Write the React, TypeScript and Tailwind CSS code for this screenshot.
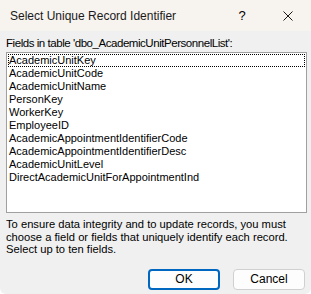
const fields = [
  "AcademicUnitKey",
  "AcademicUnitCode",
  "AcademicUnitName",
  "PersonKey",
  "WorkerKey",
  "EmployeeID",
  "AcademicAppointmentIdentifierCode",
  "AcademicAppointmentIdentifierDesc",
  "AcademicUnitLevel",
  "DirectAcademicUnitForAppointmentInd",
];

export default function App() {
  return (
    <div
      className="w-[311px] h-[294px] bg-[#f0f0f0] flex flex-col overflow-hidden rounded-b-[6px] text-[#000]"
      style={{ fontFamily: "'Liberation Sans', Arial, sans-serif" }}
    >
      {/* Title bar */}
      <div className="h-[31px] bg-[#f7f3ef] flex items-center shrink-0">
        <span className="pl-[10px] text-[12px] flex-1 text-[#1a1a1a]">Select Unique Record Identifier</span>
        <span className="w-[46px] text-center text-[13px]">?</span>
        <span className="w-[46px] flex justify-center">
          <svg width="10" height="10" viewBox="0 0 10 10" stroke="#1a1a1a" strokeWidth="1">
            <path d="M0.5 0.5L9.5 9.5M9.5 0.5L0.5 9.5" />
          </svg>
        </span>
      </div>

      <div className="flex flex-col px-[6px] pt-[5px]">
        <div className="text-[11.5px] leading-[15px] tracking-[-0.45px] whitespace-nowrap">
          Fields in table 'dbo_AcademicUnitPersonnelList':
        </div>
        <div className="mt-[1px] h-[161px] w-[301px] bg-white border border-[#a0a0a0] p-[1px]">
          <ul className="text-[11px] leading-[13px]">
            {fields.map((f, i) => (
              <li
                key={f}
                className={`h-[13px] pl-[1px] whitespace-nowrap ${
                  i === 0 ? "outline outline-1 outline-dotted outline-black -outline-offset-1" : ""
                }`}
              >
                {f}
              </li>
            ))}
          </ul>
        </div>
        <p className="mt-[5px] text-[11.2px] leading-[12.5px] whitespace-nowrap">
          To ensure data integrity and to update records, you must
          <br />
          choose a field or fields that uniquely identify each record.
          <br />
          Select up to ten fields.
        </p>
        <div className="flex justify-end gap-[13px] mt-[13px]">
          <button className="w-[72px] h-[21px] rounded-[4px] border-2 border-[#0067c0] bg-[#fdfdfd] text-[12px] leading-none">
            OK
          </button>
          <button className="w-[72px] h-[21px] rounded-[4px] border border-[#d0d0d0] bg-[#fdfdfd] text-[12px] leading-none">
            Cancel
          </button>
        </div>
      </div>
    </div>
  );
}
